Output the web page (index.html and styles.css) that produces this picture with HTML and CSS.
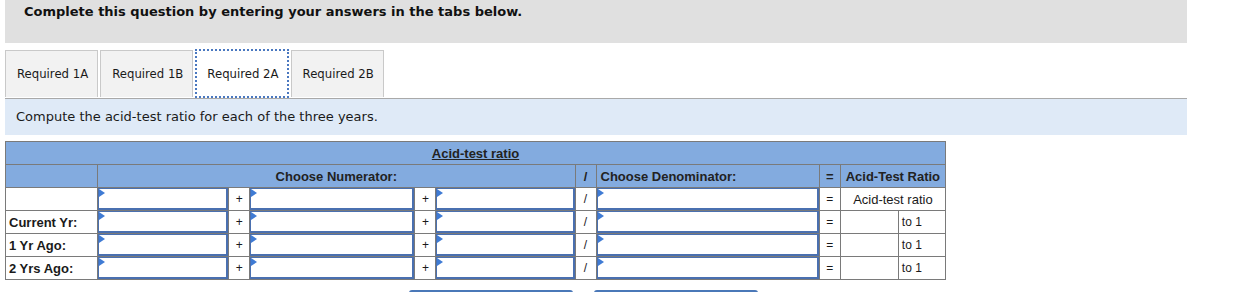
FILE: index.html
```html
<!DOCTYPE html>
<html lang="en">
<head>
    <meta charset="UTF-8">
    <meta name="viewport" content="width=device-width, initial-scale=1.0">
    <title>Acid-test ratio</title>
    <link rel="stylesheet" href="styles.css">
</head>
<body>
    <div class="page">
        <div class="question-head">Complete this question by entering your answers in the tabs below.</div>

        <div class="tabs">
            <div class="tab">Required 1A</div>
            <div class="tab">Required 1B</div>
            <div class="tab active">Required 2A</div>
            <div class="tab">Required 2B</div>
        </div>

        <div class="instructions">Compute the acid-test ratio for each of the three years.</div>

        <table class="ratio">
            <colgroup>
                <col class="c-label">
                <col class="c-in1">
                <col class="c-op">
                <col class="c-in2">
                <col class="c-op">
                <col class="c-in3">
                <col class="c-op">
                <col class="c-in4">
                <col class="c-op">
                <col class="c-res">
                <col class="c-to">
            </colgroup>
            <tr class="head">
                <th colspan="11"><u>Acid-test ratio</u></th>
            </tr>
            <tr class="head">
                <th></th>
                <th colspan="5">Choose Numerator:</th>
                <th>/</th>
                <th class="left">Choose Denominator:</th>
                <th>=</th>
                <th colspan="2">Acid-Test Ratio</th>
            </tr>
            <tr>
                <td></td>
                <td class="sel"></td>
                <td class="op">+</td>
                <td class="sel"></td>
                <td class="op">+</td>
                <td class="sel"></td>
                <td class="op">/</td>
                <td class="sel"></td>
                <td class="op">=</td>
                <td colspan="2" class="center">Acid-test ratio</td>
            </tr>
            <tr>
                <td class="label">Current Yr:</td>
                <td class="sel"></td>
                <td class="op">+</td>
                <td class="sel"></td>
                <td class="op">+</td>
                <td class="sel"></td>
                <td class="op">/</td>
                <td class="sel"></td>
                <td class="op">=</td>
                <td></td>
                <td class="to">to 1</td>
            </tr>
            <tr>
                <td class="label">1 Yr Ago:</td>
                <td class="sel"></td>
                <td class="op">+</td>
                <td class="sel"></td>
                <td class="op">+</td>
                <td class="sel"></td>
                <td class="op">/</td>
                <td class="sel"></td>
                <td class="op">=</td>
                <td></td>
                <td class="to">to 1</td>
            </tr>
            <tr>
                <td class="label">2 Yrs Ago:</td>
                <td class="sel"></td>
                <td class="op">+</td>
                <td class="sel"></td>
                <td class="op">+</td>
                <td class="sel"></td>
                <td class="op">/</td>
                <td class="sel"></td>
                <td class="op">=</td>
                <td></td>
                <td class="to">to 1</td>
            </tr>
        </table>

        <!-- prev / next buttons, only their top edge is in view -->
        <div class="nav">
            <button class="nav-btn" aria-label="Previous"></button>
            <button class="nav-btn" aria-label="Next"></button>
        </div>
    </div>
</body>
</html>
```

FILE: styles.css
```css
/* acid-test ratio question */
body {
    margin: 0;
    background-color: #ffffff;
    color: #1a1a1a;
    font-family: 'DejaVu Sans', Verdana, sans-serif;
}

.page {
    width: 1182px;
    padding: 0 5px;
}

.question-head {
    height: 43px;
    box-sizing: border-box;
    padding: 4px 0 0 19px;
    background-color: #e0e0e0;
    font-size: 13px;
    font-weight: bold;
    color: #111111;
}

.tabs {
    display: flex;
    gap: 2px;
    margin-top: 7px;
}

.tab {
    height: 47px;
    box-sizing: border-box;
    padding: 0 9px 0 11px;
    display: flex;
    align-items: center;
    font-size: 11.7px;
    background-color: #f2f2f2;
    border: 1px solid #c9c9c9;
    border-bottom: none;
}

.tab.active {
    background-color: #ffffff;
    border: 2px dotted #4a78c0;
    margin-top: -1px;
    height: 49px;
    padding: 0 8px 0 10px;
    position: relative;
    z-index: 1;
}

.instructions {
    height: 37px;
    box-sizing: border-box;
    border-top: 1px solid #a9a9a9;
    background-color: #dfeaf7;
    padding: 10px 0 0 11px;
    font-size: 13px;
}

.ratio {
    margin-top: 6px;
    width: 941px;
    table-layout: fixed;
    border-collapse: collapse;
    font-family: 'Liberation Sans', Arial, sans-serif;
    font-size: 12px;
}

.c-label { width: 92px; }
.c-in1 { width: 131px; }
.c-op { width: 21px; }
.c-in2 { width: 165px; }
.c-in3 { width: 139px; }
.c-in4 { width: 223px; }
.c-res { width: 58px; }
.c-to { width: 47px; }

.ratio th,
.ratio td {
    border: 1px solid #7a7a7a;
    height: 23px;
    padding: 0;
    box-sizing: border-box;
}

.ratio .head th {
    background-color: #83abdf;
    font-weight: bold;
    font-size: 13px;
    color: #222222;
    text-align: center;
}

.ratio .head th.left {
    text-align: left;
    padding-left: 4px;
}

.ratio td {
    background-color: #ffffff;
    font-size: 12px;
}

.ratio td.label {
    font-weight: bold;
    font-size: 13px;
    padding-left: 3px;
}

.ratio td.op {
    text-align: center;
}

.ratio td.center {
    text-align: center;
    font-size: 13px;
}

.ratio td.to {
    padding-left: 3px;
}

.ratio td.sel {
    position: relative;
    box-shadow: inset 1px 1px 0 #4a70b0, inset -2px -2px 0 #4a70b0;
}

/* little dropdown flag in the corner */
.ratio td.sel::before {
    content: "";
    position: absolute;
    left: 1px;
    top: 1px;
    border-left: 6px solid #3f7bd4;
    border-top: 4px solid transparent;
    border-bottom: 4px solid transparent;
}

.nav {
    display: flex;
    gap: 21px;
    margin-top: 10px;
    padding-left: 404px;
}

.nav-btn {
    width: 164px;
    height: 30px;
    border: none;
    border-radius: 3px;
    background-color: #4a78b8;
}
```
